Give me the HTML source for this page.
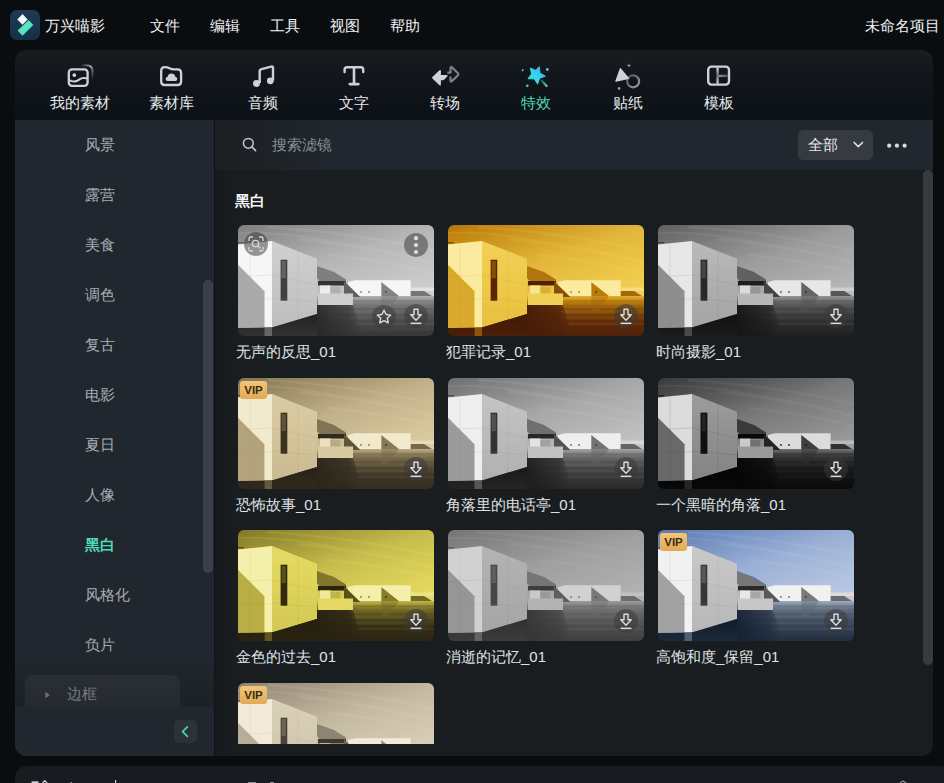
<!DOCTYPE html><html><head><meta charset="utf-8"><style>
*{box-sizing:border-box;margin:0;padding:0}
html,body{width:944px;height:783px;overflow:hidden;background:#0a0d10;font-family:"Liberation Sans",sans-serif;color:#e6e8ea}
.abs{position:absolute}
.t{position:absolute;white-space:nowrap;line-height:20px}
#logo{left:10px;top:10px;width:30px;height:30px;border-radius:7px;background:linear-gradient(#1f3a50,#16304a);overflow:hidden}
#panel{left:15px;top:50px;width:918px;height:706px;border-radius:12px;overflow:hidden;background:#1a1d20}
#tool{left:0;top:0;width:918px;height:70px;background:linear-gradient(#191c20,#12161b 40%,#0b1117)}
#side{left:0;top:70px;width:199px;height:636px;background:#21272e}
#divider{left:199px;top:70px;width:1px;height:636px;background:#0f1113}
#search{left:200px;top:70px;width:718px;height:50px;background:linear-gradient(90deg,#1b1f22 0,#21272e 120px,#21272e)}
#content{left:200px;top:120px;width:718px;height:586px;background:linear-gradient(90deg,#171a1d,#1a1d20 22px)}
#bottom{left:15px;top:766px;width:940px;height:40px;border-radius:12px;background:#181c20}
.menu{top:16px;font-size:15px;color:#f0f2f4}
.tl{top:93px;font-size:15px;color:#e8eaec;text-align:center;width:90px}
.si{font-size:15px;color:#a9adb2}
.lbl{font-size:15px;color:#dfe2e5}
.card{position:absolute;width:196px;height:111px;border-radius:6px;overflow:hidden}
.card svg.sc{position:absolute;left:0;top:0;width:196px;height:111px}
.btn{position:absolute;width:24px;height:24px;border-radius:12px;background:rgba(58,58,58,.52)}
.btn svg{position:absolute;left:0;top:0}
.vip{position:absolute;left:2px;top:3px;width:27px;height:18px;border-radius:3px;background:linear-gradient(#f2c679,#e2a955);color:#3a2a12;font-weight:bold;font-size:11.5px;line-height:18px;text-align:center}
.ico{position:absolute}
</style></head><body>
<svg width="0" height="0" style="position:absolute">
<defs>
<linearGradient id="gsky" x1="0" y1="0" x2="0.6" y2="1">
  <stop offset="0" stop-color="#767676"/>
  <stop offset="0.45" stop-color="#acacac"/>
  <stop offset="1" stop-color="#cdcdcd"/>
</linearGradient>
<linearGradient id="gwater" x1="0" y1="0" x2="0" y2="1">
  <stop offset="0" stop-color="#a8a8a8"/>
  <stop offset="0.2" stop-color="#6e6e6e"/>
  <stop offset="0.55" stop-color="#4c4c4c"/>
  <stop offset="1" stop-color="#303030"/>
</linearGradient>
<linearGradient id="gside" x1="0" y1="0" x2="0" y2="1">
  <stop offset="0" stop-color="#c6c6c6"/>
  <stop offset="1" stop-color="#b4b4b4"/>
</linearGradient>
<linearGradient id="gpavd" x1="0" y1="0" x2="1" y2="0"><stop offset="0" stop-color="#222" stop-opacity=".9"/><stop offset=".7" stop-color="#2a2a2a" stop-opacity=".6"/><stop offset="1" stop-color="#333" stop-opacity="0"/></linearGradient>
<linearGradient id="gpav" x1="0" y1="0" x2="0" y2="1"><stop offset="0" stop-color="#3a3a3a"/><stop offset="1" stop-color="#444"/></linearGradient>
<linearGradient id="gunder" x1="0" y1="0" x2="0" y2="1">
  <stop offset="0" stop-color="#1e1e1e"/>
  <stop offset="1" stop-color="#2c2c2c"/>
</linearGradient>
<symbol id="scene" viewBox="0 0 196 111" preserveAspectRatio="none">
  <rect width="196" height="111" fill="url(#gsky)"/>
  <g fill="none" stroke="#d8d8d8" opacity=".1">
   <path d="M30 2Q120 8 196 26" stroke-width="2.5"/>
   <path d="M60 14Q140 22 196 38" stroke-width="3"/>
   <path d="M90 30Q150 36 196 48" stroke-width="2.5"/>
   <path d="M0 8Q50 6 110 20" stroke-width="2"/>
  </g>
  <rect y="71" width="196" height="40" fill="url(#gwater)"/>
  <g stroke="#2a2a2a" stroke-width=".7" opacity=".3">
   <path d="M115 76H196M80 84H196M80 90H196M80 96H196M80 102H196M80 107H196"/>
  </g>
  <g stroke="#b0b0b0" stroke-width=".5" opacity=".25">
   <path d="M120 79H190M90 87H180M100 93H170M120 99H196"/>
  </g>
  <polygon points="110,57 117,55.2 172.7,55.2 172.7,71 110,71" fill="#ececec"/>
  <polygon points="143.3,57 161,71 143.3,71" fill="#7a7a7a"/>
  <polygon points="143.3,71 161,71 150,86 143.3,86" fill="#6a6a6a" opacity=".45"/>
  <rect x="172.7" y="62.5" width="23.3" height="3.5" fill="#d8d8d8"/>
  <polygon points="172.7,66 186,66 194,71 172.7,71" fill="#6c6c6c"/>
  <circle cx="123" cy="67" r=".8" fill="#333"/><circle cx="131" cy="67" r=".8" fill="#333"/><circle cx="148" cy="67" r=".8" fill="#222"/>
  <polygon points="79,41 96,47 108,54.5 108,57 82,56.5 79,53" fill="#767676"/>
  <rect x="80" y="56" width="28" height="4.5" fill="#2e2e2e"/>
  <polygon points="106,56 122.4,72 106,72" fill="#5a5a5a"/>
  <rect x="82" y="60.5" width="10.4" height="8.5" fill="#e2e2e2"/>
  <rect x="92.4" y="62" width="10" height="7" fill="#a6a6a6"/>
  <rect x="80" y="68.5" width="35" height="11.5" fill="#c4c4c4"/>
  <polygon points="79,80 115,80 125,111 79,111" fill="url(#gpavd)"/>
  
  <polygon points="0,19.6 34,16 34,102.5 0,103" fill="#ececec"/>
  <polygon points="0,39.7 26.5,66.3 26.5,102.5 0,103" fill="#a0a0a0"/>
  <polygon points="34,16 79,33.7 79,89 34,102.5" fill="url(#gside)"/>
  <rect x="42.6" y="34.7" width="6.7" height="41" fill="#3a3a3a"/>
  <rect x="43.6" y="36" width="4.2" height="17" fill="#5a5a5a"/>
  <g stroke="#808080" stroke-width=".4" opacity=".35">
   <path d="M0 51.5L34 50M34 50L79 60M34 73L79 77M0 74H34M12 20V103M60 26V96"/>
  </g>
  <polygon points="0,103 34,102.5 79,89 79,111 0,111" fill="url(#gunder)"/>
  <rect x="26.5" y="102.5" width="7.5" height="8.5" fill="#8a8a8a" opacity=".55"/>
  <rect x="0" y="17" width="6" height="1.4" fill="#3a3a3a" opacity=".6"/>
</symbol>
</defs>
</svg>

<svg width="0" height="0" style="position:absolute"><filter id="fgold" color-interpolation-filters="sRGB"><feComponentTransfer><feFuncR type="table" tableValues="0.16 0.36 0.76 0.94 1"/><feFuncG type="table" tableValues="0.05 0.16 0.52 0.8 0.97"/><feFuncB type="table" tableValues="0.02 0.04 0.06 0.3 0.78"/></feComponentTransfer></filter><filter id="fgold2" color-interpolation-filters="sRGB"><feComponentTransfer><feFuncR type="table" tableValues="0.1 0.2 0.56 0.88 0.99"/><feFuncG type="table" tableValues="0.08 0.17 0.52 0.84 0.98"/><feFuncB type="table" tableValues="0.05 0.08 0.18 0.36 0.8"/></feComponentTransfer></filter><filter id="fsepia" color-interpolation-filters="sRGB"><feComponentTransfer><feFuncR type="table" tableValues="0.08 0.24 0.56 0.84 1"/><feFuncG type="table" tableValues="0.07 0.21 0.5 0.78 0.98"/><feFuncB type="table" tableValues="0.05 0.15 0.36 0.62 0.88"/></feComponentTransfer></filter><filter id="fsepia2" color-interpolation-filters="sRGB"><feComponentTransfer><feFuncR type="table" tableValues="0.1 0.3 0.6 0.84 0.99"/><feFuncG type="table" tableValues="0.09 0.28 0.56 0.8 0.97"/><feFuncB type="table" tableValues="0.08 0.24 0.48 0.7 0.92"/></feComponentTransfer></filter><filter id="fbw1" color-interpolation-filters="sRGB"><feComponentTransfer><feFuncR type="gamma" amplitude="1.04" exponent="0.95" offset="0"/><feFuncG type="gamma" amplitude="1.04" exponent="0.95" offset="0"/><feFuncB type="gamma" amplitude="1.04" exponent="0.95" offset="0"/></feComponentTransfer></filter><filter id="fbw3" color-interpolation-filters="sRGB"><feComponentTransfer><feFuncR type="gamma" amplitude="1.0" exponent="1.25" offset="0"/><feFuncG type="gamma" amplitude="1.0" exponent="1.25" offset="0"/><feFuncB type="gamma" amplitude="1.0" exponent="1.25" offset="0"/></feComponentTransfer></filter><filter id="fbw5" color-interpolation-filters="sRGB"><feComponentTransfer><feFuncR type="gamma" amplitude="1.02" exponent="1.1" offset="0"/><feFuncG type="gamma" amplitude="1.02" exponent="1.1" offset="0"/><feFuncB type="gamma" amplitude="1.02" exponent="1.1" offset="0"/></feComponentTransfer></filter><filter id="fdark" color-interpolation-filters="sRGB"><feComponentTransfer><feFuncR type="gamma" amplitude="1.0" exponent="1.9" offset="0"/><feFuncG type="gamma" amplitude="1.0" exponent="1.9" offset="0"/><feFuncB type="gamma" amplitude="1.0" exponent="1.9" offset="0"/></feComponentTransfer></filter><filter id="ffade" color-interpolation-filters="sRGB"><feComponentTransfer><feFuncR type="gamma" amplitude="0.78" exponent="1.0" offset="0.1"/><feFuncG type="gamma" amplitude="0.78" exponent="1.0" offset="0.1"/><feFuncB type="gamma" amplitude="0.78" exponent="1.0" offset="0.1"/></feComponentTransfer></filter><linearGradient id="gblue" x1="0" y1="0" x2="0.2" y2="1"><stop offset="0" stop-color="#3a78e8"/><stop offset="1" stop-color="#7aa0e0"/></linearGradient></svg>
<div id="panel" class="abs"><div id="tool" class="abs"></div><div id="side" class="abs"></div><div id="divider" class="abs"></div><div id="search" class="abs"></div><div id="content" class="abs"></div></div>
<div id="bottom" class="abs"></div>
<div id="logo" class="abs"><svg width="30" height="30" viewBox="0 0 30 30"><path d="M12.5 4.1L17.6 9.5 12.5 14.8 7.3 9.5z" fill="#f6f8fa"/><path d="M18.6 9.9L23.3 14.9 12.5 25.7 7.6 20.4z" fill="#55e3c0"/></svg></div>
<svg class="ico" style="left:0;top:0" width="944" height="120" viewBox="0 0 944 120">
<defs>
<linearGradient id="arcg" x1="0" y1="0" x2="1" y2="1"><stop offset="0" stop-color="#cdd2d8" stop-opacity="0"/><stop offset=".45" stop-color="#cdd2d8" stop-opacity=".75"/><stop offset="1" stop-color="#cdd2d8" stop-opacity="0"/></linearGradient>
<linearGradient id="starg" x1="0" y1="1" x2="1" y2="0"><stop offset="0" stop-color="#3fe0c0"/><stop offset=".45" stop-color="#36d6f2"/><stop offset="1" stop-color="#3fa6f8"/></linearGradient>
<linearGradient id="wandg" x1="0" y1="0" x2="1" y2="1"><stop offset="0" stop-color="#1f5a5a"/><stop offset="1" stop-color="#4fd9b4"/></linearGradient>
<linearGradient id="ringg" x1="0" y1="0" x2="1" y2="1"><stop offset="0" stop-color="#4a5058"/><stop offset="1" stop-color="#9aa0a8"/></linearGradient>
<linearGradient id="tplv" x1="0" y1="0" x2="0" y2="1"><stop offset="0" stop-color="#cdd2d8"/><stop offset=".5" stop-color="#6a7078"/><stop offset="1" stop-color="#cdd2d8"/></linearGradient>
<linearGradient id="tplh" x1="0" y1="0" x2="1" y2="0"><stop offset="0" stop-color="#8a9098"/><stop offset="1" stop-color="#50565e"/></linearGradient>
</defs>
<!-- my media -->
<path d="M80.5 65.3H86.5Q92.6 65.3 92.6 71.4V80" fill="none" stroke="url(#arcg)" stroke-width="2"/>
<rect x="68.8" y="69.3" width="18.8" height="16.5" rx="3.2" fill="none" stroke="#cdd2d8" stroke-width="2.3"/>
<circle cx="74.3" cy="75.1" r="1.9" fill="#cdd2d8"/>
<path d="M69.3 80Q72 81.8 75 81.4Q77.5 81 79.5 79.4Q81.7 77.8 84 78T88 78.6" fill="none" stroke="#cdd2d8" stroke-width="2.1"/>
<!-- library folder -->
<path d="M161.2 71Q161.2 67.1 164.8 67.1Q167.3 67.1 169.5 68.3T174.5 69.4H177.6Q181.1 69.4 181.1 73V81.4Q181.1 85 177.6 85H164.7Q161.2 85 161.2 81.4Z" fill="none" stroke="#cdd2d8" stroke-width="2.3"/>
<path d="M167.6 81H175.3Q177.3 81 177.3 78.9Q177.3 77.1 175.4 76.9Q175 73.4 171.4 73.4Q168 73.4 167.5 76.9Q165.6 77.1 165.6 78.9Q165.6 81 167.6 81Z" fill="#cdd2d8"/>
<!-- audio -->
<path d="M259.7 83V71.4Q259.7 69.6 261.5 69.2L271.2 66.6Q273 66.2 273 68V80.5" fill="none" stroke="#cdd2d8" stroke-width="2.4"/>
<circle cx="256.5" cy="83.5" r="3.4" fill="#cdd2d8"/>
<circle cx="270.3" cy="80.8" r="3.4" fill="#cdd2d8"/>
<!-- text T -->
<path d="M344.6 72V69.5Q344.6 67.2 347 67.2H360.8Q363.2 67.2 363.2 69.5V72" fill="none" stroke="#cdd2d8" stroke-width="2.4" stroke-linecap="round"/>
<path d="M354 67.5V84" stroke="#cdd2d8" stroke-width="2.6"/>
<path d="M349.8 84.1H358.4" stroke="#cdd2d8" stroke-width="2.6" stroke-linecap="round"/>
<!-- transition -->
<path d="M447.3 72.6H450.5V68.2Q450.5 66 452.2 67.6L458 73.2Q459 74.3 458 75.3L452.2 80.9Q450.5 82.5 450.5 80.3V76.5" fill="none" stroke="#7b8189" stroke-width="2.2" stroke-linejoin="round"/>
<path d="M432.4 77.1L439.2 70.5Q440.9 69 440.9 71.3V75H446.5Q448.4 75 447.2 76.4L444.6 79.3Q443.8 80.2 442.5 80.2H440.9V84.3Q440.9 86.6 439.2 85L432.4 78.5Q431.6 77.8 432.4 77.1Z" fill="#cdd2d8"/>
<!-- effects star -->
<path transform="translate(536 75.5) scale(.92) translate(-536 -75.5)" d="M539.5 66.2L540.4 73.1 546 76.4 539.9 78.3 537.7 84.5 534.1 79.1 527.6 78.9 531.4 73.8 529.9 67.6 535.9 70z" fill="url(#starg)" stroke="url(#starg)" stroke-width="1.2" stroke-linejoin="round"/>
<path d="M541.5 80.6L546.6 86" stroke="url(#wandg)" stroke-width="2.2" stroke-linecap="round"/>
<path d="M522.7 68.8L523.8 70.2 522.7 71.6 521.6 70.2z" fill="#38d8f0"/>
<circle cx="547.3" cy="69.5" r="1.4" fill="#38d0f2"/>
<circle cx="527.3" cy="85.7" r="1.3" fill="#38d0f2"/>
<!-- sticker -->
<circle cx="633.1" cy="81.3" r="6" fill="none" stroke="url(#ringg)" stroke-width="2.2"/>
<path d="M619.8 68.4Q620.4 67.6 621 68.4L629.2 78.3Q629.7 79 628.8 79.1L616 81.8Q615.1 82 615.3 81.1z" fill="#cdd2d8"/>
<path d="M629 63.2L629.6 64.9 631.3 65.4 629.6 66 629 67.7 628.4 66 626.7 65.4 628.4 64.9z" fill="#9aa0a8"/>
<circle cx="619.1" cy="88.4" r="1.3" fill="#9aa0a8"/>
<!-- template -->
<rect x="708.2" y="66.6" width="20.8" height="18" rx="3.3" fill="none" stroke="#cdd2d8" stroke-width="2.4"/>
<rect x="716.4" y="67.6" width="2.4" height="16" fill="url(#tplv)"/>
<rect x="718.8" y="74.7" width="9" height="2.4" fill="url(#tplh)"/>
</svg>
<div class="t menu" style="left:45px">万兴喵影</div>
<div class="t menu" style="left:150px">文件</div>
<div class="t menu" style="left:210px">编辑</div>
<div class="t menu" style="left:270px">工具</div>
<div class="t menu" style="left:330px">视图</div>
<div class="t menu" style="left:390px">帮助</div>
<div class="t menu" style="left:865px">未命名项目</div>
<div class="t tl" style="left:35px">我的素材</div>
<div class="t tl" style="left:126px">素材库</div>
<div class="t tl" style="left:218px">音频</div>
<div class="t tl" style="left:309px">文字</div>
<div class="t tl" style="left:400px">转场</div>
<div class="t tl" style="left:491px;color:#4fd9b4">特效</div>
<div class="t tl" style="left:583px">贴纸</div>
<div class="t tl" style="left:674px">模板</div>
<div class="t si" style="left:85px;top:135px">风景</div>
<div class="t si" style="left:85px;top:185px">露营</div>
<div class="t si" style="left:85px;top:235px">美食</div>
<div class="t si" style="left:85px;top:285px">调色</div>
<div class="t si" style="left:85px;top:335px">复古</div>
<div class="t si" style="left:85px;top:385px">电影</div>
<div class="t si" style="left:85px;top:435px">夏日</div>
<div class="t si" style="left:85px;top:485px">人像</div>
<div class="t si" style="left:85px;top:535px;color:#4fd9b4;font-weight:bold">黑白</div>
<div class="t si" style="left:85px;top:585px">风格化</div>
<div class="t si" style="left:85px;top:635px">负片</div>
<div class="t" style="left:272px;top:135px;font-size:15px;color:#8b9096">搜索滤镜</div>
<div class="t" style="left:235px;top:191px;font-size:15px;font-weight:bold;color:#f2f4f6">黑白</div>
<svg class="ico" style="left:0;top:120px" width="944" height="50" viewBox="0 120 944 50">
<circle cx="248.3" cy="143.3" r="4.9" fill="none" stroke="#c2c7cd" stroke-width="1.5"/>
<path d="M251.9 146.9L255.6 150.6" stroke="#c2c7cd" stroke-width="1.6" stroke-linecap="round"/>
<rect x="798" y="130" width="75" height="30" rx="5.5" fill="#363b42"/>
<path d="M854 142.4L858.3 146.6 862.6 142.4" fill="none" stroke="#d8dce0" stroke-width="1.5" stroke-linecap="round" stroke-linejoin="round"/>
<circle cx="889.2" cy="145.7" r="2.1" fill="#d6dadf"/><circle cx="896.9" cy="145.7" r="2.1" fill="#d6dadf"/><circle cx="904.6" cy="145.7" r="2.1" fill="#d6dadf"/>
</svg>
<div class="t" style="left:808px;top:135px;font-size:15px;color:#e6e9ec">全部</div>
<div class="abs" style="left:203px;top:280px;width:10px;height:293px;border-radius:5px;background:#3a4047"></div>
<div class="abs" style="left:923px;top:170px;width:9.5px;height:495px;border-radius:5px;background:#363a41"></div>
<div class="abs" style="left:15px;top:655px;width:199px;height:52px;background:linear-gradient(rgba(20,23,27,0),rgba(20,23,27,.35))"></div>
<div class="abs" style="left:25px;top:675px;width:155px;height:32px;border-radius:8px 8px 0 0;background:linear-gradient(#2a2f35,#252a2f)"></div>
<svg class="ico" style="left:44px;top:690px" width="8" height="10" viewBox="0 0 8 10"><path d="M1.3 1.8L6 5 1.3 8.2z" fill="#6c7075"/></svg>
<div class="t" style="left:67px;top:684px;font-size:15px;color:#777b80">边框</div>
<div class="abs" style="left:15px;top:707px;width:199px;height:49px;border-radius:0 0 0 12px;background:#21272e"></div>
<div class="abs" style="left:174px;top:720px;width:23px;height:23px;border-radius:5px;background:#2d3238"></div>
<svg class="ico" style="left:174px;top:720px" width="23" height="23" viewBox="0 0 23 23"><path d="M13.4 6.8L8.6 11.6 13.4 16.4" fill="none" stroke="#3fd8b4" stroke-width="1.7" stroke-linecap="round" stroke-linejoin="round"/></svg>
<svg class="ico" style="left:0;top:775px" width="944" height="8" viewBox="0 775 944 8"><rect x="31.5" y="781.3" width="7" height="1.7" fill="#c9ced4"/><path d="M42.5 783L44.8 780.8 47 783" fill="none" stroke="#c9ced4" stroke-width="1.4"/><rect x="70.5" y="782" width="1.5" height="1" fill="#8a9096"/><rect x="115" y="780" width="1.2" height="3" fill="#c9ced4"/><rect x="248" y="782" width="8" height="1" fill="#8a9096"/><rect x="270" y="782" width="4" height="1" fill="#8a9096"/><path d="M900 783L903 781 906 783" fill="none" stroke="#8a9096" stroke-width="1.2"/></svg>
<div class="card" style="left:238px;top:225px;height:111px"><svg class="sc" style="filter:url(#fbw1)" viewBox="0 0 196 111" preserveAspectRatio="none"><use href="#scene"/></svg><div class="btn" style="left:166px;top:79px"><svg width="24" height="24" viewBox="0 0 24 24"><path d="M10 5.2h4v5.6h3.2L12 16.3 6.8 10.8H10z" fill="none" stroke="#d9dee4" stroke-width="1.4" stroke-linejoin="round"/><rect x="6.6" y="18.6" width="10.8" height="1.5" fill="#d9dee4"/></svg></div><div class="btn" style="left:133.5px;top:80px"><svg width="24" height="24" viewBox="0 0 24 24"><path d="M12 5.2l2.1 4.3 4.6.6-3.4 3.2.9 4.6L12 15.6l-4.2 2.3.9-4.6-3.4-3.2 4.6-.6z" fill="none" stroke="#d9dee4" stroke-width="1.4" stroke-linejoin="round"/></svg></div><div class="btn" style="left:166px;top:7.5px"><svg width="24" height="24" viewBox="0 0 24 24" fill="#d9dee4"><circle cx="12" cy="5.2" r="2.1"/><circle cx="12" cy="12.1" r="2.1"/><circle cx="12" cy="19" r="2.1"/></svg></div><div class="btn" style="left:5.5px;top:6.5px"><svg width="24" height="24" viewBox="0 0 24 24" fill="none" stroke="#d0d6dc" stroke-width="1.3"><path d="M5 9V6.5Q5 5 6.5 5H9M15 5h2.5Q19 5 19 6.5V9M19 15v2.5Q19 19 17.5 19H15M9 19H6.5Q5 19 5 17.5V15"/><circle cx="11.5" cy="11.5" r="3.2"/><path d="M13.8 13.8l2.4 2.4"/></svg></div></div><div class="t lbl" style="left:236px;top:342px">无声的反思_01</div>
<div class="card" style="left:448px;top:225px;height:111px"><svg class="sc" style="filter:url(#fgold)" viewBox="0 0 196 111" preserveAspectRatio="none"><use href="#scene"/></svg><div class="btn" style="left:166px;top:79px"><svg width="24" height="24" viewBox="0 0 24 24"><path d="M10 5.2h4v5.6h3.2L12 16.3 6.8 10.8H10z" fill="none" stroke="#d9dee4" stroke-width="1.4" stroke-linejoin="round"/><rect x="6.6" y="18.6" width="10.8" height="1.5" fill="#d9dee4"/></svg></div></div><div class="t lbl" style="left:446px;top:342px">犯罪记录_01</div>
<div class="card" style="left:658px;top:225px;height:111px"><svg class="sc" style="filter:url(#fbw3)" viewBox="0 0 196 111" preserveAspectRatio="none"><use href="#scene"/></svg><div class="btn" style="left:166px;top:79px"><svg width="24" height="24" viewBox="0 0 24 24"><path d="M10 5.2h4v5.6h3.2L12 16.3 6.8 10.8H10z" fill="none" stroke="#d9dee4" stroke-width="1.4" stroke-linejoin="round"/><rect x="6.6" y="18.6" width="10.8" height="1.5" fill="#d9dee4"/></svg></div></div><div class="t lbl" style="left:656px;top:342px">时尚摄影_01</div>
<div class="card" style="left:238px;top:378px;height:111px"><svg class="sc" style="filter:url(#fsepia)" viewBox="0 0 196 111" preserveAspectRatio="none"><use href="#scene"/></svg><div class="vip">VIP</div><div class="btn" style="left:166px;top:79px"><svg width="24" height="24" viewBox="0 0 24 24"><path d="M10 5.2h4v5.6h3.2L12 16.3 6.8 10.8H10z" fill="none" stroke="#d9dee4" stroke-width="1.4" stroke-linejoin="round"/><rect x="6.6" y="18.6" width="10.8" height="1.5" fill="#d9dee4"/></svg></div></div><div class="t lbl" style="left:236px;top:495px">恐怖故事_01</div>
<div class="card" style="left:448px;top:378px;height:111px"><svg class="sc" style="filter:url(#fbw5)" viewBox="0 0 196 111" preserveAspectRatio="none"><use href="#scene"/></svg><div class="btn" style="left:166px;top:79px"><svg width="24" height="24" viewBox="0 0 24 24"><path d="M10 5.2h4v5.6h3.2L12 16.3 6.8 10.8H10z" fill="none" stroke="#d9dee4" stroke-width="1.4" stroke-linejoin="round"/><rect x="6.6" y="18.6" width="10.8" height="1.5" fill="#d9dee4"/></svg></div></div><div class="t lbl" style="left:446px;top:495px">角落里的电话亭_01</div>
<div class="card" style="left:658px;top:378px;height:111px"><svg class="sc" style="filter:url(#fdark)" viewBox="0 0 196 111" preserveAspectRatio="none"><use href="#scene"/></svg><div class="btn" style="left:166px;top:79px"><svg width="24" height="24" viewBox="0 0 24 24"><path d="M10 5.2h4v5.6h3.2L12 16.3 6.8 10.8H10z" fill="none" stroke="#d9dee4" stroke-width="1.4" stroke-linejoin="round"/><rect x="6.6" y="18.6" width="10.8" height="1.5" fill="#d9dee4"/></svg></div></div><div class="t lbl" style="left:656px;top:495px">一个黑暗的角落_01</div>
<div class="card" style="left:238px;top:530px;height:111px"><svg class="sc" style="filter:url(#fgold2)" viewBox="0 0 196 111" preserveAspectRatio="none"><use href="#scene"/></svg><div class="btn" style="left:166px;top:79px"><svg width="24" height="24" viewBox="0 0 24 24"><path d="M10 5.2h4v5.6h3.2L12 16.3 6.8 10.8H10z" fill="none" stroke="#d9dee4" stroke-width="1.4" stroke-linejoin="round"/><rect x="6.6" y="18.6" width="10.8" height="1.5" fill="#d9dee4"/></svg></div></div><div class="t lbl" style="left:236px;top:647px">金色的过去_01</div>
<div class="card" style="left:448px;top:530px;height:111px"><svg class="sc" style="filter:url(#ffade)" viewBox="0 0 196 111" preserveAspectRatio="none"><use href="#scene"/></svg><div class="btn" style="left:166px;top:79px"><svg width="24" height="24" viewBox="0 0 24 24"><path d="M10 5.2h4v5.6h3.2L12 16.3 6.8 10.8H10z" fill="none" stroke="#d9dee4" stroke-width="1.4" stroke-linejoin="round"/><rect x="6.6" y="18.6" width="10.8" height="1.5" fill="#d9dee4"/></svg></div></div><div class="t lbl" style="left:446px;top:647px">消逝的记忆_01</div>
<div class="card" style="left:658px;top:530px;height:111px"><svg class="sc" style="filter:contrast(1.05)" viewBox="0 0 196 111" preserveAspectRatio="none"><use href="#scene"/><polygon points="0,0 196,0 196,62.5 172.7,62.5 172.7,55.2 117,55.2 110,57 108,55.2 79,41 79,33.7 34,16 0,19.6" fill="url(#gblue)" opacity=".45" style="mix-blend-mode:color"/><polygon points="115,71 196,71 196,111 0,111 0,103 34,102.5 79,89 80,80 115,80" fill="#4a6890" opacity=".4" style="mix-blend-mode:color"/></svg><div class="vip">VIP</div><div class="btn" style="left:166px;top:79px"><svg width="24" height="24" viewBox="0 0 24 24"><path d="M10 5.2h4v5.6h3.2L12 16.3 6.8 10.8H10z" fill="none" stroke="#d9dee4" stroke-width="1.4" stroke-linejoin="round"/><rect x="6.6" y="18.6" width="10.8" height="1.5" fill="#d9dee4"/></svg></div></div><div class="t lbl" style="left:656px;top:647px">高饱和度_保留_01</div>
<div class="card" style="left:238px;top:683px;height:61px;border-radius:6px 6px 0 0"><svg class="sc" style="filter:url(#fsepia2)" viewBox="0 0 196 111" preserveAspectRatio="none"><use href="#scene"/></svg><div class="vip">VIP</div></div></body></html>
